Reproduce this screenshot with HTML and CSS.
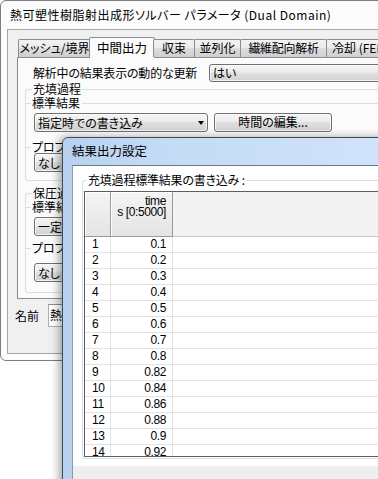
FILE: index.html
```html
<!DOCTYPE html>
<html lang="ja">
<head>
<meta charset="utf-8">
<title>結果出力設定</title>
<link rel="stylesheet" href="styles.css">
</head>
<body>
<div class="screen">
  <div class="win">
    <div class="win-title">熱可塑性樹脂射出成形ソルバー パラメータ (Dual Domain)</div>
    <div class="win-client">
      <div class="tabs">
        <div class="tab t1">メッシュ/境界</div>
        <div class="tab sel t2">中間出力</div>
        <div class="tab t3">収束</div>
        <div class="tab t4">並列化</div>
        <div class="tab t5">繊維配向解析</div>
        <div class="tab t6">冷却 (FEM)</div>
      </div>
      <div class="panel">
        <div class="row-top">
          <span class="lbl">解析中の結果表示の動的な更新</span>
          <div class="combo wide"><span>はい</span></div>
        </div>
        <div class="group g1">
          <div class="g-title">充填過程</div>
          <div class="sub"><span>標準結果</span></div>
          <div class="ctrl-row">
            <div class="combo std"><span>指定時での書き込み</span><i class="arrow"></i></div>
            <div class="btn">時間の編集...</div>
          </div>
          <div class="sub sub2"><span>プロファイル結果</span></div>
          <div class="ctrl-row">
            <div class="combo std"><span>なし</span><i class="arrow"></i></div>
          </div>
        </div>
        <div class="group g2">
          <div class="g-title">保圧過程</div>
          <div class="sub"><span>標準結果</span></div>
          <div class="ctrl-row">
            <div class="combo std"><span>一定間隔での書き込み</span><i class="arrow"></i></div>
          </div>
          <div class="sub sub2"><span>プロファイル結果</span></div>
          <div class="ctrl-row">
            <div class="combo std"><span>なし</span><i class="arrow"></i></div>
          </div>
        </div>
      </div>
      <div class="name-row">
        <span class="name-lbl">名前</span>
        <div class="field">熱可塑性樹脂</div>
      </div>
    </div>
  </div>

  <div class="dialog">
    <div class="dlg-title">結果出力設定</div>
    <div class="dlg-client">
      <div class="dgroup">
        <div class="dg-title">充填過程標準結果の書き込み :</div>
        <div class="grid">
          <div class="grid-head">
            <div class="hc corner"></div>
            <div class="hc col"><span>time</span><span>s [0:5000]</span></div>
            <div class="hfill"></div>
          </div>
          <div class="grow"><div class="c-num">1</div><div class="c-val">0.1</div><div class="c-fill"></div></div>
          <div class="grow"><div class="c-num">2</div><div class="c-val">0.2</div><div class="c-fill"></div></div>
          <div class="grow"><div class="c-num">3</div><div class="c-val">0.3</div><div class="c-fill"></div></div>
          <div class="grow"><div class="c-num">4</div><div class="c-val">0.4</div><div class="c-fill"></div></div>
          <div class="grow"><div class="c-num">5</div><div class="c-val">0.5</div><div class="c-fill"></div></div>
          <div class="grow"><div class="c-num">6</div><div class="c-val">0.6</div><div class="c-fill"></div></div>
          <div class="grow"><div class="c-num">7</div><div class="c-val">0.7</div><div class="c-fill"></div></div>
          <div class="grow"><div class="c-num">8</div><div class="c-val">0.8</div><div class="c-fill"></div></div>
          <div class="grow"><div class="c-num">9</div><div class="c-val">0.82</div><div class="c-fill"></div></div>
          <div class="grow"><div class="c-num">10</div><div class="c-val">0.84</div><div class="c-fill"></div></div>
          <div class="grow"><div class="c-num">11</div><div class="c-val">0.86</div><div class="c-fill"></div></div>
          <div class="grow"><div class="c-num">12</div><div class="c-val">0.88</div><div class="c-fill"></div></div>
          <div class="grow"><div class="c-num">13</div><div class="c-val">0.9</div><div class="c-fill"></div></div>
          <div class="grow"><div class="c-num">14</div><div class="c-val">0.92</div><div class="c-fill"></div></div>
        </div>
      </div>
      <div class="dlg-foot"></div>
    </div>
  </div>
</div>
</body>
</html>
```

FILE: styles.css
```css
* { box-sizing: border-box; margin: 0; padding: 0; }
html, body { width: 378px; height: 479px; overflow: hidden; background: #fff; }
body {
  font-family: "Noto Sans CJK JP", "Liberation Sans", sans-serif;
  font-size: 12px;
  line-height: 14px;
  color: #000;
  font-feature-settings: "palt" 1;
}
.screen { position: relative; width: 378px; height: 479px; overflow: hidden; }

/* back window */
.win {
  width: 440px;
  height: 361px;
  border: 1px solid #7d7d7d;
  border-radius: 6px;
  background: #fcfcfc;
  padding: 0 0 6px 6px;
  display: flex;
  flex-direction: column;
}
.win-title {
  height: 28px;
  line-height: 27px;
  padding-left: 3px;
  white-space: nowrap;
  letter-spacing: 0.5px;
}
.win-client {
  flex: 1;
  border: 1px solid #a5a5a5;
  background: #f0f0f0;
  display: flex;
  flex-direction: column;
}
.tabs {
  display: flex;
  align-items: flex-end;
  padding-top: 7px;
  margin-left: 10px;
  height: 27px;
  position: relative;
  z-index: 2;
}
.tab {
  height: 18px;
  border: 1px solid #898c95;
  border-bottom: none;
  border-radius: 2px 2px 0 0;
  background: linear-gradient(#f3f3f3 0%, #ebebeb 45%, #dddddd 50%, #cfcfcf 100%);
  line-height: 16px;
  text-align: center;
  white-space: nowrap;
  overflow: hidden;
  margin-left: -1px;
}
.t1 { width: 73px; margin-left: 0; }
.tab.sel {
  width: 66px;
  height: 21px;
  margin-left: -2px;
  margin-right: -1px;
  margin-bottom: -1px;
  background: #fbfbfb;
  line-height: 19px;
  font-size: 12.5px;
}
.t3 { width: 42px; }
.t4 { width: 47px; }
.t5 { width: 87px; letter-spacing: -0.3px; }
.t6 { width: 70px; text-align: left; padding-left: 5px; }

.panel {
  margin-left: 9px;
  height: 242px;
  border: 1px solid #898c95;
  border-right: none;
  background: #fbfbfb;
  position: relative;
  z-index: 1;
}
.row-top {
  display: flex;
  align-items: center;
  height: 18px;
  margin-top: 6px;
}
.lbl {
  width: 191px;
  padding-left: 15px;
  white-space: nowrap;
  letter-spacing: -0.2px;
}
.combo {
  height: 19px;
  border: 1px solid #707070;
  border-radius: 3px;
  background: linear-gradient(#f5f5f5 0%, #ececec 45%, #dfdfdf 50%, #d2d2d2 100%);
  box-shadow: inset 0 0 0 1px rgba(255,255,255,0.7);
  display: flex;
  align-items: center;
  padding-left: 3px;
  white-space: nowrap;
  line-height: 16px;
}
.combo.wide { width: 200px; height: 18px; }
.combo.std { width: 174px; margin-left: 8px; }
.arrow {
  margin-left: auto;
  margin-right: 3px;
  width: 0;
  height: 0;
  border-left: 3.5px solid transparent;
  border-right: 3.5px solid transparent;
  border-top: 4px solid #000;
}
.btn {
  width: 118px;
  height: 19px;
  margin-left: 6px;
  border: 1px solid #707070;
  border-radius: 3px;
  background: linear-gradient(#f5f5f5 0%, #ececec 45%, #dfdfdf 50%, #d2d2d2 100%);
  box-shadow: inset 0 0 0 1px rgba(255,255,255,0.7);
  text-align: center;
  line-height: 16px;
}

.group {
  width: 420px;
  margin-left: 7px;
  border: 1px solid #d5dfe5;
  border-right: none;
  border-radius: 3px 0 0 3px;
}
.g1 { margin-top: 7px; height: 92px; }
.g2 { margin-top: 12px; height: 100px; }
.g-title {
  width: max-content;
  height: 14px;
  line-height: 14px;
  margin-top: -8px;
  margin-left: 6px;
  padding: 0 1px;
  background: #fbfbfb;
}
.sub {
  display: flex;
  align-items: center;
  height: 12px;
  line-height: 12px;
  margin-top: 1px;
}
.sub::before {
  content: "";
  width: 5px;
  height: 1px;
  background: #d5dfe5;
  margin-right: 1px;
}
.sub::after {
  content: "";
  flex: 1;
  height: 1px;
  background: #d5dfe5;
  margin-left: 2px;
}
.sub span { white-space: nowrap; }
.sub2 { margin-top: 9px; }
.ctrl-row { display: flex; margin-top: 4px; }
.sub2 + .ctrl-row { margin-top: 0; }
.g2 .sub2 { margin-top: 6px; }
.g2 .sub2 + .ctrl-row { margin-top: 9px; }

.name-row {
  display: flex;
  align-items: center;
  margin-top: 5px;
  height: 23px;
}
.name-lbl { width: 40px; padding-left: 7px; }
.field {
  width: 300px;
  height: 23px;
  border: 1px solid #abadb3;
  border-top-color: #8e8f8f;
  background: #fff;
  padding-left: 1px;
  line-height: 20px;
  white-space: nowrap;
  overflow: hidden;
}

/* front dialog */
.dialog {
  position: absolute;
  left: 62px;
  top: 137px;
  width: 330px;
  height: 360px;
  border: 1px solid #3e4a58;
  border-radius: 6px 6px 0 0;
  background: linear-gradient(90deg, #b7d1ee 0%, #c4dbf5 30%, #d0e4fa 100%);
  box-shadow: -3px 0 8px rgba(0,0,0,0.35);
  padding-left: 9px;
  display: flex;
  flex-direction: column;
  z-index: 5;
}
.dlg-title {
  height: 27px;
  line-height: 26px;
  font-size: 12.5px;
}
.dlg-client {
  flex: 1;
  background: #fff;
  border-top: 1px solid #6b7888;
  border-left: 1px solid #8e9aa8;
}
.dgroup {
  margin-top: 14px;
  margin-left: 9px;
  border: 1px solid #d5dfe5;
  border-right: none;
  border-radius: 3px 0 0 3px;
  padding-bottom: 1px;
}
.dg-title {
  width: max-content;
  height: 14px;
  line-height: 14px;
  margin-top: -8px;
  margin-left: 4px;
  padding: 0 1px;
  background: #fff;
  letter-spacing: -0.2px;
}
.grid {
  margin-top: 4px;
  margin-left: 1px;
  height: 266px;
  border-top: 1px solid #5e5e5e;
  border-left: 1px solid #5e5e5e;
  border-bottom: 1px solid #5e5e5e;
  overflow: hidden;
  background: #fff;
  font-family: "Liberation Sans", "Noto Sans CJK JP", sans-serif;
  font-size: 12px;
  letter-spacing: -0.4px;
}
.grid-head { display: flex; height: 45px; }
.hc {
  border-right: 1px solid #9a9a9a;
  border-bottom: 1px solid #9a9a9a;
  background: linear-gradient(#f4f4f4, #e4e4e4);
  box-shadow: inset 1px 1px 0 #ffffff;
}
.corner { width: 26px; }
.col {
  width: 62px;
  display: flex;
  flex-direction: column;
  align-items: flex-end;
  padding: 4px 6px 0 0;
  line-height: 11px;
  white-space: nowrap;
}
.hfill {
  flex: 1;
  background: #f3f3f3;
  border-bottom: 1px solid #c8c8c8;
}
.grow {
  display: flex;
  height: 16px;
  border-bottom: 1px solid #e2e2e2;
  line-height: 15px;
}
.c-num {
  width: 26px;
  padding-left: 7px;
  border-right: 1px solid #e2e2e2;
}
.c-val {
  width: 62px;
  padding-right: 6px;
  text-align: right;
  border-right: 1px solid #e2e2e2;
}
.c-fill { flex: 1; }
.dlg-foot {
  margin-top: 7px;
  height: 30px;
  background: #efefef;
}
```
